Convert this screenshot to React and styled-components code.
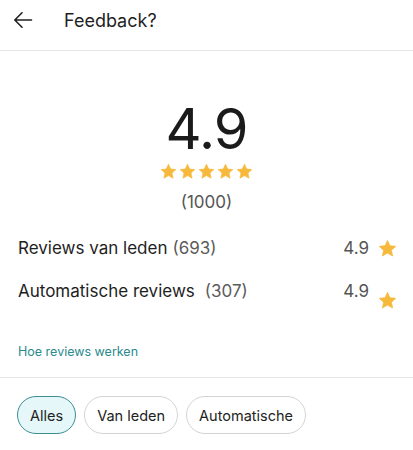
import React from 'react';
import styled, { createGlobalStyle } from 'styled-components';

const GlobalStyle = createGlobalStyle`
  body {
    margin: 0;
    background: #ffffff;
    font-family: Inter, "Noto Sans", sans-serif;
    color: #1c1c1c;
  }
`;

const Page = styled.div`
  width: 413px;
  background: #fff;
`;

const Header = styled.div`
  display: flex;
  align-items: center;
  height: 40px;
  padding: 0 0 10px 13px;
  border-bottom: 1px solid #e6e6e6;
`;

const BackButton = styled.div`
  width: 20px;
  height: 20px;
  display: flex;
  align-items: center;
  margin-right: 31px;
`;

const Title = styled.div`
  font-size: 18px;
  font-weight: 400;
  color: #1f1f1f;
`;

const Summary = styled.div`
  display: flex;
  flex-direction: column;
  align-items: center;
  padding-top: 44px;
`;

const BigScore = styled.div`
  font-size: 56px;
  line-height: 68px;
  font-weight: 400;
  color: #1b1b1b;
  letter-spacing: -1px;
`;

const Stars = styled.div`
  display: flex;
  gap: 2px;
  margin-top: 0;
`;

const Count = styled.div`
  font-size: 17px;
  color: #555;
  margin-top: 12px;
`;

const Breakdown = styled.div`
  padding: 24px 16px 0 18px;
  display: flex;
  flex-direction: column;
  gap: 18px;
`;

const Row = styled.div`
  display: flex;
  justify-content: space-between;
  align-items: flex-start;
  height: 25px;
`;

const Label = styled.div`
  font-size: 17px;
  color: #1e1e1e;
  line-height: 24px;
`;

const Muted = styled.span`
  color: #5b5b5b;
  margin-left: ${p => p.gap}px;
`;

const Score = styled.div`
  display: flex;
  align-items: ${p => (p.dropped ? 'flex-start' : 'center')};
  font-size: 17px;
  color: #555;
  line-height: 24px;
  svg {
    margin-left: 9px;
    margin-top: ${p => (p.dropped ? '12px' : '0')};
  }
`;

const HowLink = styled.div`
  font-size: 12.5px;
  color: #2a8a8c;
  padding: 40px 18px 0;
  height: 33px;
  border-bottom: 1px solid #e6e6e6;
`;

const Chips = styled.div`
  display: flex;
  gap: 8px;
  padding: 18px 17px;
`;

const Chip = styled.div`
  height: 38px;
  box-sizing: border-box;
  padding: 0 12px;
  border-radius: 19px;
  display: flex;
  align-items: center;
  font-size: 14.5px;
  color: #222;
  background: ${p => (p.active ? '#e5f7f9' : '#fff')};
  border: 1px solid ${p => (p.active ? '#3b8f92' : '#d4d4d4')};
`;

const Star = ({ size = 17 }) => (
  <svg width={size} height={size} viewBox="0 0 24 24">
    <path
      d="M12 1.8l3.05 6.7 7.3.8-5.45 4.95 1.55 7.2L12 17.8l-6.45 3.65 1.55-7.2L1.65 9.3l7.3-.8z"
      fill="#f6b93b"
      stroke="#f6b93b"
      strokeWidth="1"
      strokeLinejoin="round"
    />
  </svg>
);

const ArrowLeft = () => (
  <svg width="20" height="20" viewBox="0 0 20 20" fill="none" stroke="#1f1f1f" strokeWidth="1.6" strokeLinecap="round" strokeLinejoin="round">
    <path d="M18.5 10H1.8M9 2.8L1.8 10 9 17.2" />
  </svg>
);

export default function App() {
  return (
    <Page>
      <GlobalStyle />
      <Header>
        <BackButton><ArrowLeft /></BackButton>
        <Title>Feedback?</Title>
      </Header>
      <Summary>
        <BigScore>4.9</BigScore>
        <Stars>
          {[0, 1, 2, 3, 4].map(i => <Star key={i} />)}
        </Stars>
        <Count>(1000)</Count>
      </Summary>
      <Breakdown>
        <Row>
          <Label>Reviews van leden<Muted gap={5}>(693)</Muted></Label>
          <Score>4.9<Star size={19} /></Score>
        </Row>
        <Row>
          <Label>Automatische reviews<Muted gap={10}>(307)</Muted></Label>
          <Score dropped>4.9<Star size={19} /></Score>
        </Row>
      </Breakdown>
      <HowLink>Hoe reviews werken</HowLink>
      <Chips>
        <Chip active>Alles</Chip>
        <Chip>Van leden</Chip>
        <Chip>Automatische</Chip>
      </Chips>
    </Page>
  );
}
